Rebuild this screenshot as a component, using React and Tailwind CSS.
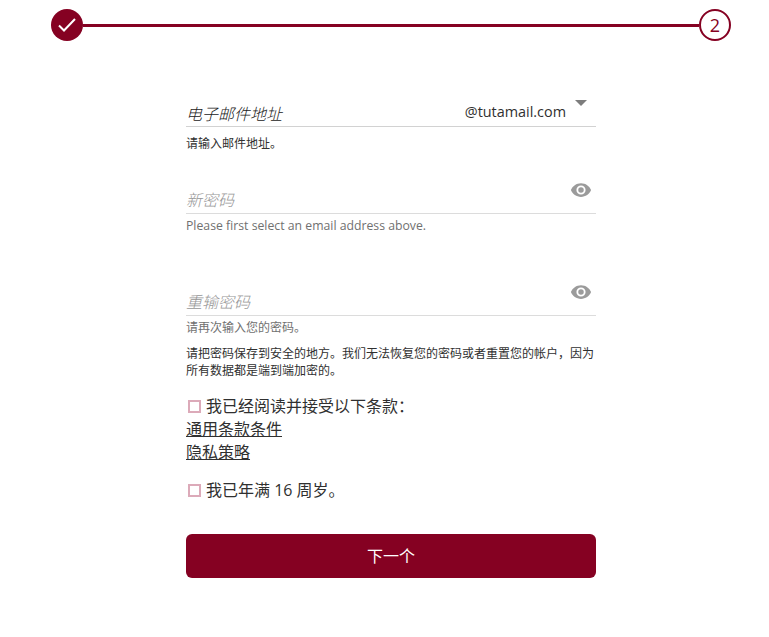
const F = '"Open Sans", "Noto Sans CJK SC", sans-serif';

function Eye() {
  return (
    <svg width="22" height="22" viewBox="0 0 24 24" fill="#9b9b9b">
      <path d="M12 4.5C7 4.5 2.7 7.6 1 12c1.7 4.4 6 7.5 11 7.5s9.3-3.1 11-7.5c-1.7-4.4-6-7.5-11-7.5zM12 17a5 5 0 1 1 0-10 5 5 0 0 1 0 10zm0-8a3 3 0 1 0 0 6 3 3 0 0 0 0-6z" />
    </svg>
  );
}

function Box() {
  return <span className="block w-[13px] h-[13px] border-2 border-[#dcaab9] mx-[2px] shrink-0" />;
}

function PasswordField({ label, help, helpClass, eyeClass }) {
  return (
    <div>
      <div className="flex items-start justify-between h-[46px] border-b border-[#dcdcdc]">
        <span className="mt-[20px] text-[16px] leading-[24px] italic font-light text-[#969696]">{label}</span>
        <span className={eyeClass}><Eye /></span>
      </div>
      <div className={helpClass}>{help}</div>
    </div>
  );
}

export default function App() {
  return (
    <div className="w-[769px] h-[637px] bg-white overflow-hidden" style={{ fontFamily: F }}>
      <div className="flex items-center pt-[9px] pl-[51px] pr-[38px]">
        <div className="w-[32px] h-[32px] rounded-full bg-[#850122] flex items-center justify-center shrink-0">
          <svg width="20" height="20" viewBox="0 0 20 20" fill="none" stroke="#fff" strokeWidth="2">
            <path d="M2 10.5l5 5L18 4" />
          </svg>
        </div>
        <div className="flex-1 h-[3px] bg-[#850122]" />
        <div className="w-[32px] h-[32px] rounded-full border-2 border-[#850122] flex items-center justify-center shrink-0 text-[18px] text-[#850122]">2</div>
      </div>

      <div className="w-[410px] ml-[186px] mt-[58px]">
        <div className="relative flex items-start justify-between h-[28px] border-b border-[#d2d2d2]">
          <span className="mt-[3px] text-[16px] leading-[24px] italic font-light text-[#222222]">电子邮件地址</span>
          <span className="mt-[1px] mr-[30px] text-[14.4px] leading-[24px] text-[#303030]">@tutamail.com</span>
          <span className="absolute right-[9px] top-[1px] w-0 h-0 border-x-[6px] border-x-transparent border-t-[6px] border-t-[#7d7d7d]" />
        </div>
        <div className="mt-[8px] text-[12px] leading-[17px] text-[#303030]">请输入邮件地址。</div>

        <div className="mt-[16px]">
          <PasswordField label="新密码" help="Please first select an email address above." eyeClass="mt-[11px] mr-[4px]" helpClass="mt-[3px] h-[53px] text-[12.25px] leading-[17px] text-[#707070]" />
        </div>
        <PasswordField label="重输密码" help="请再次输入您的密码。" eyeClass="mt-[11px] mr-[4px]" helpClass="mt-[3px] text-[12px] leading-[17px] text-[#707070]" />

        <div className="mt-[9px] text-[12px] leading-[17px] text-[#303030]">
          请把密码保存到安全的地方。我们无法恢复您的密码或者重置您的帐户，因为所有数据都是端到端加密的。
        </div>

        <div className="mt-[16px] text-[16px] leading-[23px] text-[#303030]">
          <div className="flex items-center gap-[3px]"><Box />我已经阅读并接受以下条款：</div>
          <div><span className="underline">通用条款条件</span></div>
          <div><span className="underline">隐私策略</span></div>
        </div>
        <div className="mt-[15px] flex items-center gap-[3px] text-[16px] leading-[23px] text-[#303030]"><Box />我已年满 16 周岁。</div>

        <div className="mt-[32px] h-[44px] rounded-[6px] bg-[#850122] flex items-center justify-center text-[16px] text-white">下一个</div>
      </div>
    </div>
  );
}
